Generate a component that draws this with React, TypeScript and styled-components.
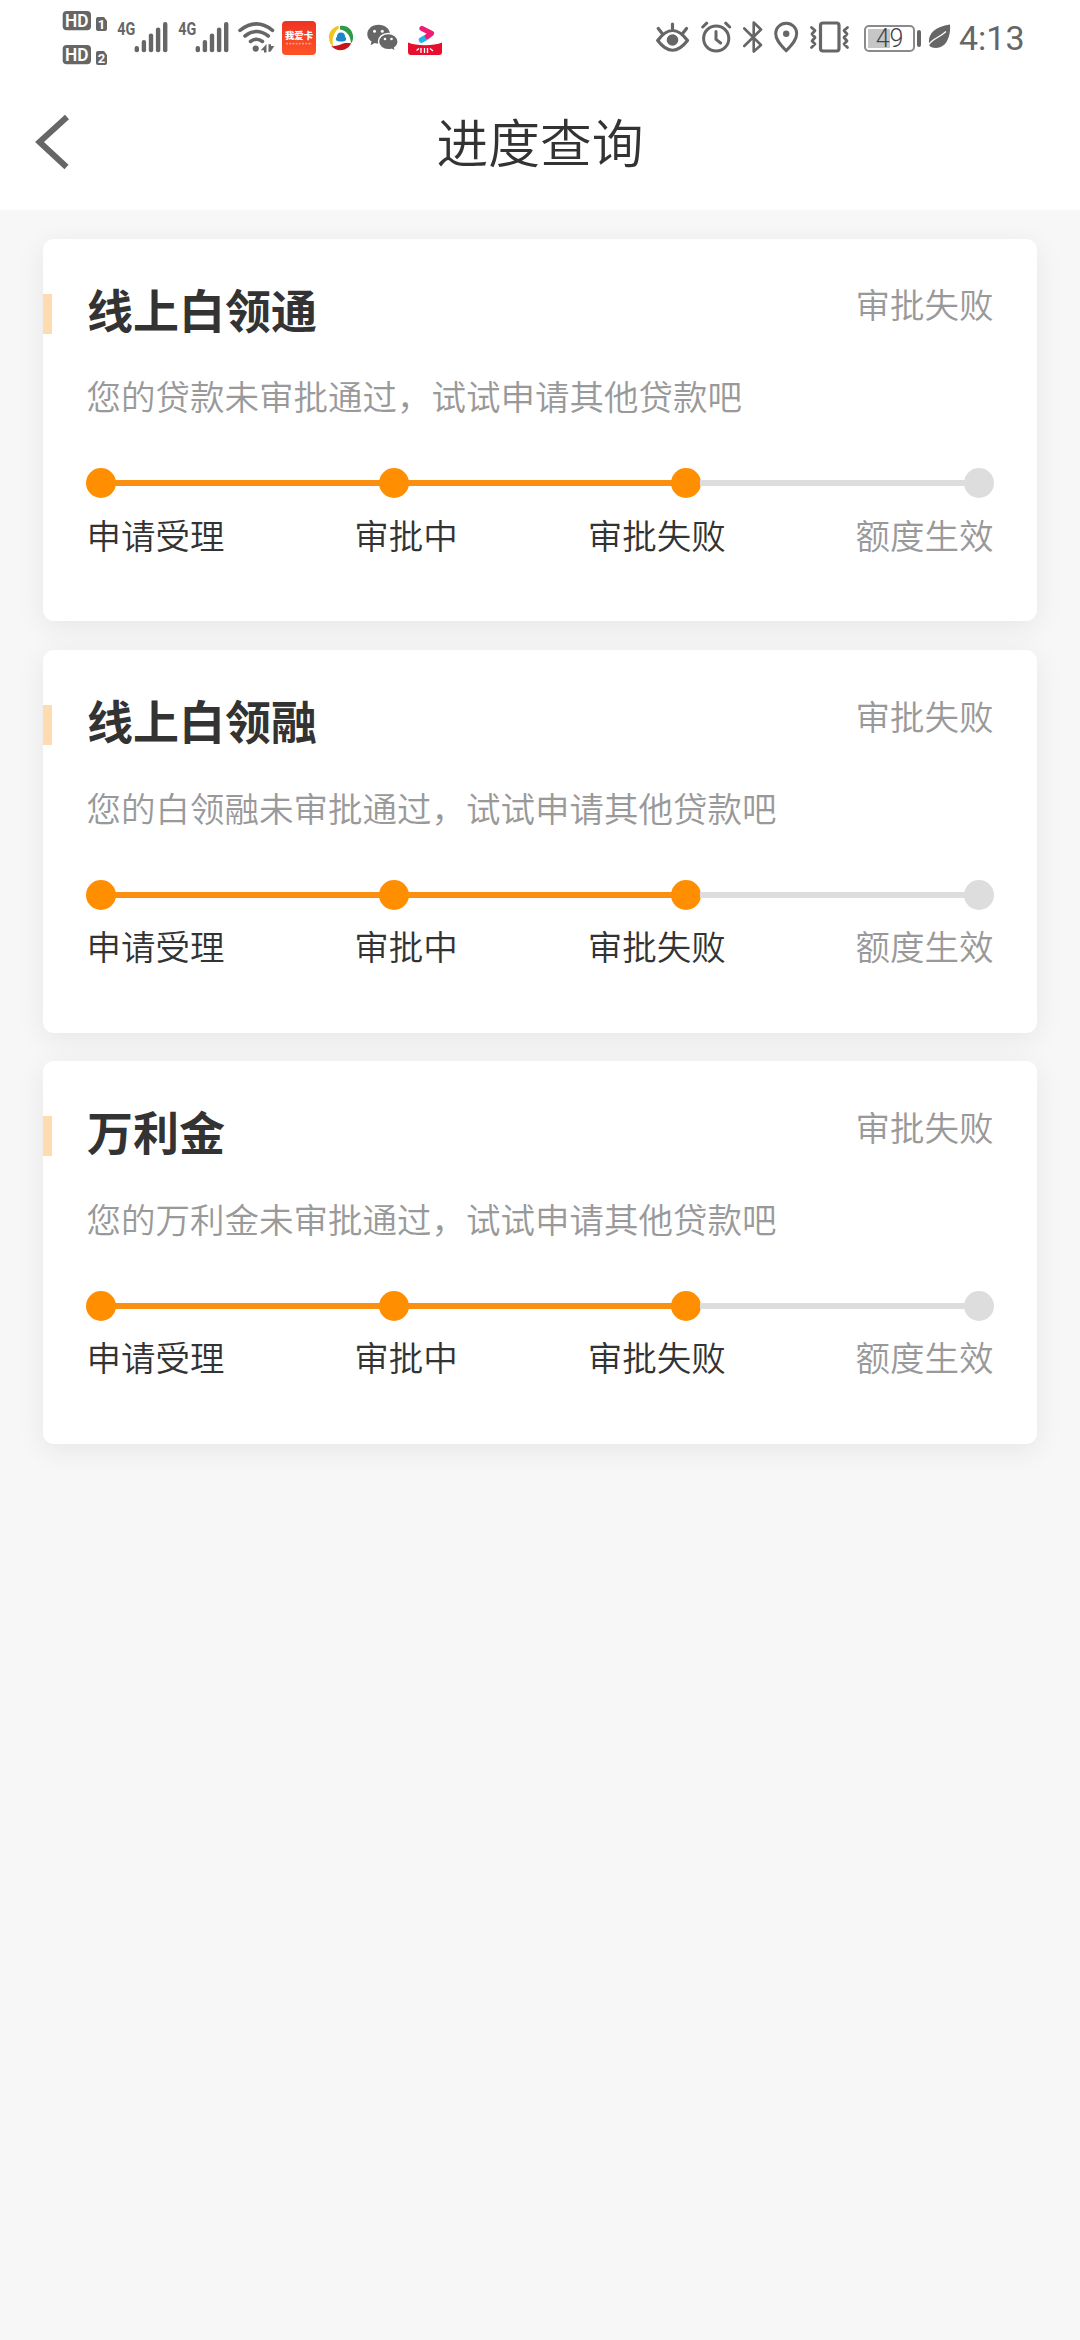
import React from "react";
import styled, { createGlobalStyle } from "styled-components";

const INK = "#666666";
const ORANGE = "#ff8f00";

const GlobalStyle = createGlobalStyle`
  body {
    margin: 0;
    background: #f7f7f7;
    font-family: "Noto Sans CJK SC", "Noto Sans", sans-serif;
    color: #333333;
  }
`;

const Screen = styled.div`
  display: flex;
  flex-direction: column;
  min-height: 2340px;
  background: #f7f7f7;
`;

const Top = styled.header`
  height: 210px;
  background: #ffffff;
`;

const StatusBar = styled.div`
  display: flex;
  justify-content: space-between;
  height: 76px;
  padding: 0 56px 0 62px;
`;

const StatusGroup = styled.div`
  display: flex;
  align-items: center;
`;

const Glyph = styled.svg<{ $gap?: number }>`
  display: block;
  flex: none;
  height: 76px;
  margin-left: ${(p) => p.$gap ?? 0}px;
`;

const Battery = styled.div`
  display: flex;
  align-items: center;
  justify-content: center;
  box-sizing: border-box;
  width: 51px;
  height: 27px;
  margin-left: 14px;
  border: 2px solid #8a8a8a;
  border-radius: 5px;
  background: linear-gradient(#c6c6c6, #c6c6c6) 2px 2px / 22px 19px no-repeat;
  font: 300 25px/23px Roboto, sans-serif;
  color: #444444;
`;

const BatteryTip = styled.div`
  width: 4px;
  height: 17px;
  margin-left: 2px;
  border-radius: 2px;
  background: ${INK};
`;

const Clock = styled.span`
  width: 65px;
  margin-left: 7px;
  font: 400 34px/76px Roboto, sans-serif;
  color: ${INK};
  white-space: nowrap;
`;

const NavBar = styled.div`
  display: grid;
  grid-template-columns: 72px 1fr 72px;
  align-items: start;
  height: 134px;
`;

const BackButton = styled.button`
  display: block;
  width: 72px;
  height: 134px;
  padding: 0;
  border: 0;
  background: none;
`;

const NavTitle = styled.h1`
  margin: 0;
  font-size: 51.75px;
  font-weight: 350;
  line-height: 130px;
  text-align: center;
  color: #333333;
`;

const CardList = styled.main`
  display: flex;
  flex-direction: column;
  gap: 28.7px;
  padding: 28.8px 43px;
`;

const CardBox = styled.section`
  box-sizing: border-box;
  height: 382.6px;
  border-radius: 11px;
  background: #ffffff;
  box-shadow: 0 6px 29px rgba(0, 0, 0, 0.07);
`;

const CardHead = styled.div`
  display: flex;
  align-items: flex-start;
  height: 118.5px;
  padding-right: 43.5px;
`;

const Accent = styled.i`
  width: 9px;
  height: 40px;
  margin-top: 55px;
  background: #ffdbb0;
`;

const CardTitle = styled.h2`
  flex: 1;
  margin: 34px 0 0 35px;
  font-size: 46px;
  font-weight: 700;
  line-height: 70px;
`;

const CardStatus = styled.span`
  margin-top: 39.5px;
  font-size: 34.5px;
  font-weight: 350;
  line-height: 50px;
  color: #999999;
`;

const Description = styled.p`
  margin: 13px 43px 0 43.5px;
  font-size: 34.5px;
  font-weight: 350;
  line-height: 50px;
  color: #999999;
`;

const Track = styled.div`
  display: flex;
  align-items: center;
  height: 30px;
  margin: 48px 43px 0;
`;

const Dot = styled.span<{ $done: boolean }>`
  flex: none;
  width: 30px;
  height: 30px;
  border-radius: 50%;
  background: ${(p) => (p.$done ? ORANGE : "#dddddd")};
`;

const Segment = styled.span<{ $done: boolean }>`
  flex: 1;
  height: 6px;
  margin: 0 -1px;
  background: ${(p) => (p.$done ? "#fb8f11" : "#dddddd")};
`;

const Labels = styled.div`
  display: flex;
  justify-content: space-between;
  margin: 10.6px 43.5px 0;
`;

const Label = styled.span<{ $done: boolean }>`
  font-size: 34.5px;
  font-weight: 350;
  line-height: 50px;
  color: ${(p) => (p.$done ? "#333333" : "#999999")};
`;

type Step = { label: string; done: boolean };

const STEPS: Step[] = [
  { label: "申请受理", done: true },
  { label: "审批中", done: true },
  { label: "审批失败", done: true },
  { label: "额度生效", done: false },
];

const LOANS = [
  { name: "线上白领通", note: "您的贷款未审批通过，试试申请其他贷款吧" },
  { name: "线上白领融", note: "您的白领融未审批通过，试试申请其他贷款吧" },
  { name: "万利金", note: "您的万利金未审批通过，试试申请其他贷款吧" },
];

function HdBadges() {
  return (
    <Glyph width="45" viewBox="0 0 45 76">
      {[0, 1].map((i) => (
        <g key={i} transform={`translate(0 ${i * 34})`}>
          <rect x="0.7" y="11" width="28.3" height="19.3" rx="4" fill={INK} />
          <text x="14.8" y="27.300" textAnchor="middle" textLength="23.500" lengthAdjust="spacingAndGlyphs" fontFamily="Roboto, sans-serif" fontWeight="600" fontSize="18.500" fill="#fff">HD</text>
          <path d="M36 17h6l3 4v8a2 2 0 0 1-2 2h-7a2 2 0 0 1-2-2V19a2 2 0 0 1 2-2z" fill={INK} />
          <text x="39.5" y="29" textAnchor="middle" fontFamily="Roboto, sans-serif" fontWeight="700" fontSize="13" fill="#fff">{i + 1}</text>
        </g>
      ))}
    </Glyph>
  );
}

function Signal({ gap }: { gap: number }) {
  return (
    <Glyph $gap={gap} width="51" viewBox="0 0 51 76">
      <text x="0.3" y="35" textLength="18" lengthAdjust="spacingAndGlyphs" fontFamily="Roboto, sans-serif" fontWeight="700" fontSize="18" fill={INK}>4G</text>
      {[46, 40, 33.5, 27.5, 22].map((y, i) => (
        <rect key={y} x={17.6 + i * 7.1} y={y} width="4.4" height={52.3 - y} rx="2.1" fill={INK} />
      ))}
    </Glyph>
  );
}

function Wifi() {
  return (
    <Glyph $gap={9} width="38" viewBox="0 0 38 76" fill="none" stroke={INK} strokeWidth="3.6" strokeLinecap="round">
      <path d="M2 30.3Q18.500 17.5 34.500 30.3M7 36Q18.500 27 30.3 36M12.5 41.5Q18.500 37 24.500 41.5" />
      <circle cx="17.700" cy="48.6" r="3.1" fill={INK} stroke="none" />
      <path d="M28.500 44v8.500h-2.500V50.200h-3.200zM30.500 44.200h2.500v1.800h3.300l-3.800 5.800h-2z" fill={INK} stroke="none" />
    </Glyph>
  );
}

function CardApp() {
  return (
    <Glyph $gap={6} width="34" viewBox="0 0 34 76">
      <defs>
        <linearGradient id="red" x1="0" y1="0" x2="0" y2="1">
          <stop offset="0" stopColor="#ee3322" />
          <stop offset="1" stopColor="#ff5426" />
        </linearGradient>
      </defs>
      <rect y="21" width="34" height="34" rx="4" fill="url(#red)" />
      <text x="17" y="39.2" textAnchor="middle" fontFamily="Noto Sans CJK SC, sans-serif" fontWeight="900" fontSize="9.4" fill="#fff">我爱卡</text>
      <path d="M4 43.7h26" stroke="#fff" strokeOpacity=".45" strokeWidth="1.800" strokeDasharray="2 1.2" />
    </Glyph>
  );
}

function BrowserApp() {
  return (
    <Glyph $gap={12} width="26" viewBox="0 0 26 76">
      <path d="M10.5 25.7C4.500 27 .7 32 1 38c.2 4 1.800 7 4.500 9C3.500 40 5 33 11 28z" fill="#f2c51d" />
      <path d="M12 26c6-1.500 12 2.500 13 9.500.4 3-.2 6-2 8-.3-8-4.500-13-11-14z" fill="#2f9a48" />
      <path d="M3 46c5 1 10-2 14-3l5 0 1 .5c-3 7-13 9.500-20 2.500z" fill="#c4161c" />
      <path d="M13 32.500c3 0 4 2 4 4 1 1.500 1.500 2.500 1 3.500-1.500 2-8.500 2-10 0-.5-1 0-2 1-3.500 0-2 1-4 4-4z" fill="#1b86c8" />
    </Glyph>
  );
}

function WeChat() {
  return (
    <Glyph $gap={13} width="32" viewBox="0 0 32 76" fill={INK}>
      <path d="M11.500 24.800C5 24.800.3 29 .3 34.200c0 3 1.500 5.500 4.200 7.200l-1 3.800 4.200-2.200c1.200.4 2.500.6 3.800.6 6.300 0 11.500-4 11.500-9.400s-5.200-9.400-11.500-9.400z" />
      <path d="M21.200 33.500c-5.500 0-9.700 3.600-9.700 8.100s4.200 8.200 9.700 8.200c1.200 0 2.300-.2 3.300-.5l4 2-.9-3.500c2.200-1.500 3.500-3.700 3.500-6.200 0-4.500-4.400-8.100-9.900-8.100z" stroke="#fff" strokeWidth="1.4" />
      <g fill="#fff">
        <circle cx="7.500" cy="31.200" r="1.5" /><circle cx="15.300" cy="31.200" r="1.5" />
        <circle cx="18" cy="39" r="1.300" /><circle cx="24.500" cy="39" r="1.300" />
      </g>
    </Glyph>
  );
}

function VideoApp() {
  return (
    <Glyph $gap={9} width="34" viewBox="0 0 34 76">
      <path d="M0 42.500c8 3.500 26 3.500 34 0v9.500q0 3-3 3H3q-3 0-3-3z" fill="#e60f2d" />
      <path d="M13.500 40L18 37.500" stroke="#23b1ec" strokeWidth="5.500" strokeLinecap="round" />
      <path d="M14 28.500l9.500 4.800-4 3" fill="none" stroke="#ef1c72" strokeWidth="5.200" strokeLinecap="round" strokeLinejoin="round" />
      <path d="M8.500 50.500l2.500-2M13 48v5M16.500 48v5M19.500 48v5M22 48.500l3 2.500" stroke="#fff" strokeWidth="1.300" fill="none" />
    </Glyph>
  );
}

function Eye() {
  return (
    <Glyph width="35" viewBox="0 0 35 76" fill="none" stroke={INK} strokeWidth="3.2" strokeLinecap="round" strokeLinejoin="round">
      <path d="M1.700 40.500Q16.500 20.500 31.500 40.500Q16.500 60 1.700 40.500zM16.500 24v4.500M2.300 28.500l3.500 4.500M30.500 28.500l-3.500 4.500" />
      <circle cx="16.500" cy="40" r="5.800" fill={INK} stroke="none" />
    </Glyph>
  );
}

function Alarm() {
  return (
    <Glyph $gap={10} width="31" viewBox="0 0 31 76" fill="none" stroke={INK} strokeWidth="3" strokeLinecap="round" strokeLinejoin="round">
      <circle cx="15.200" cy="38.500" r="12.600" />
      <path d="M15 31.500v7.800l4.600 3.700M1.700 27l4-3.800M28.700 27l-4-3.800" />
    </Glyph>
  );
}

function Bluetooth() {
  return (
    <Glyph $gap={11} width="20" viewBox="0 0 20 76" fill="none" stroke={INK} strokeWidth="2.600" strokeLinecap="round" strokeLinejoin="round">
      <path d="M1.300 28.500L18 45l-7.300 6.500V22.500L18 29.500 1.300 46" />
    </Glyph>
  );
}

function Pin() {
  return (
    <Glyph $gap={11} width="25" viewBox="0 0 25 76" fill="none" stroke={INK} strokeWidth="3">
      <path d="M12.200 50.800C5 43.500 1.700 39 1.700 33.500a10.500 10.200 0 0 1 21 0c0 5.500-3.300 10-10.500 17.300z" strokeLinejoin="round" />
      <circle cx="12.200" cy="33.800" r="3.200" fill={INK} stroke="none" />
    </Glyph>
  );
}

function Vibrate() {
  return (
    <Glyph $gap={10} width="41" viewBox="0 0 41 76" fill="none" stroke={INK} strokeWidth="2.800" strokeLinecap="round" strokeLinejoin="round">
      <rect x="11.500" y="23" width="18.500" height="28" rx="2.500" strokeWidth="3.200" />
      <path d="M2.500 27.500l3.500 3-3 3.500 3 3.500-3 3.500 3 3-3.500 3.500M38.500 27.500l-3.500 3 3 3.500-3 3.500 3 3.500-3 3 3.500 3.500" />
    </Glyph>
  );
}

function Leaf() {
  return (
    <Glyph $gap={7} width="24" viewBox="0 0 24 76">
      <path d="M22 24.500C23 37 18 48 8 48c-3 0-5-.7-6.500-2C-1 36 4 27 22 24.500z" fill={INK} />
      <path d="M1 44.500C4 39 11 38 18 31.500" fill="none" stroke="#fff" strokeWidth="1.300" />
    </Glyph>
  );
}

function LoanCard({ name, note }: { name: string; note: string }) {
  return (
    <CardBox>
      <CardHead>
        <Accent />
        <CardTitle>{name}</CardTitle>
        <CardStatus>审批失败</CardStatus>
      </CardHead>
      <Description>{note}</Description>
      <Track>
        {STEPS.map((s, i) => (
          <React.Fragment key={s.label}>
            {i > 0 && <Segment $done={s.done} />}
            <Dot $done={s.done} />
          </React.Fragment>
        ))}
      </Track>
      <Labels>
        {STEPS.map((s) => (
          <Label key={s.label} $done={s.done}>{s.label}</Label>
        ))}
      </Labels>
    </CardBox>
  );
}

export default function App() {
  return (
    <Screen>
      <GlobalStyle />
      <Top>
        <StatusBar>
          <StatusGroup>
            <HdBadges />
            <Signal gap={10} />
            <Signal gap={10} />
            <Wifi />
            <CardApp />
            <BrowserApp />
            <WeChat />
            <VideoApp />
          </StatusGroup>
          <StatusGroup>
            <Eye />
            <Alarm />
            <Bluetooth />
            <Pin />
            <Vibrate />
            <Battery>49</Battery>
            <BatteryTip />
            <Leaf />
            <Clock>4:13</Clock>
          </StatusGroup>
        </StatusBar>
        <NavBar>
          <BackButton aria-label="返回">
            <svg width="72" height="134" viewBox="0 0 72 134" fill="none" stroke="#666" strokeWidth="6">
              <path d="M67 41L39.500 66 66.500 91" />
            </svg>
          </BackButton>
          <NavTitle>进度查询</NavTitle>
        </NavBar>
      </Top>
      <CardList>
        {LOANS.map((l) => (
          <LoanCard key={l.name} {...l} />
        ))}
      </CardList>
    </Screen>
  );
}
